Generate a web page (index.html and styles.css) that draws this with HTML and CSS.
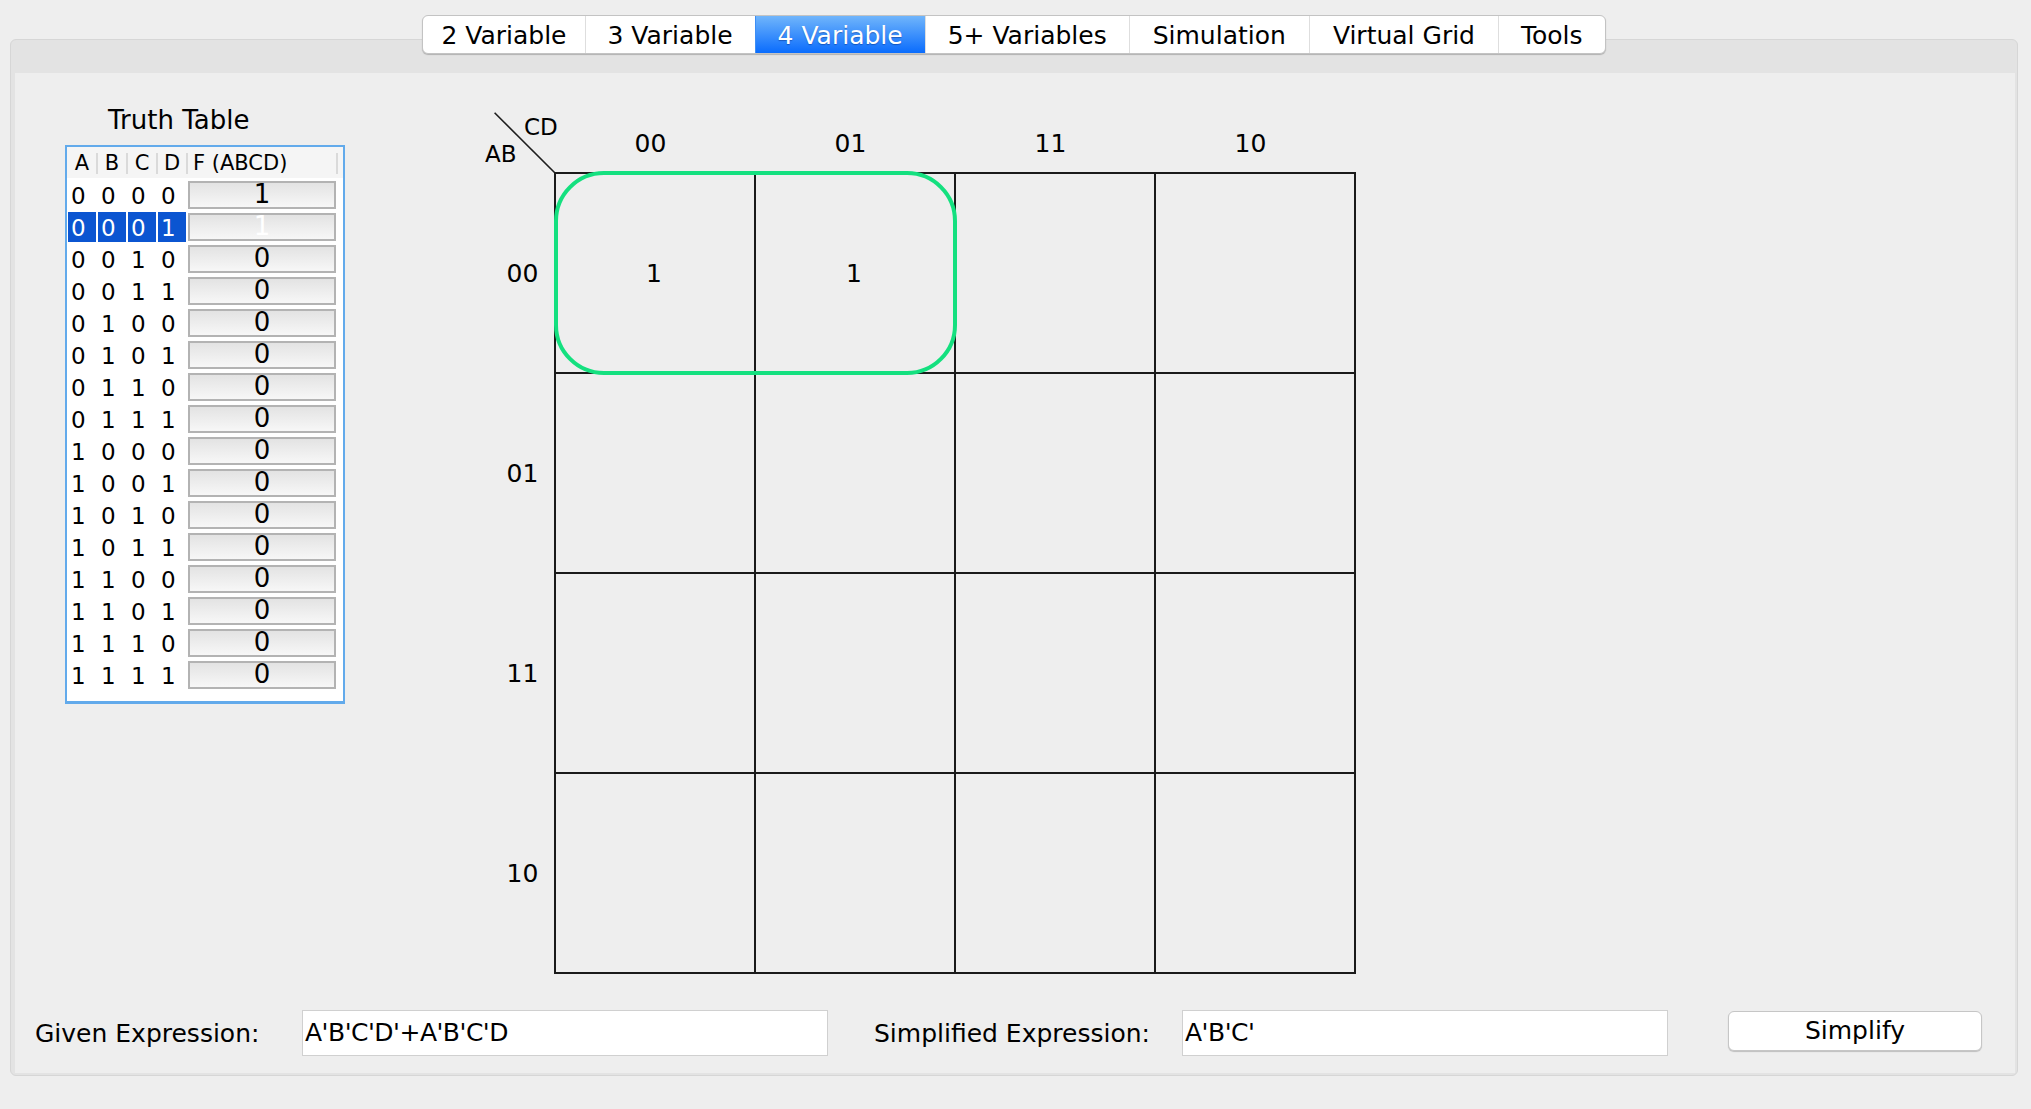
FILE: index.html
```html
<!DOCTYPE html>
<html lang="en">
<head>
<meta charset="utf-8">
<title>K-Map Solver</title>
<link rel="stylesheet" href="styles.css">
</head>
<body>
<div class="window">
  <div class="tabbar">
    <div class="tabs">
      <div class="tab">2 Variable</div>
      <div class="tab">3 Variable</div>
      <div class="tab active">4 Variable</div>
      <div class="tab">5+ Variables</div>
      <div class="tab">Simulation</div>
      <div class="tab">Virtual Grid</div>
      <div class="tab">Tools</div>
    </div>
  </div>
  <div class="panel">
    <div class="content">
      <div class="main">
        <div class="tt-col">
          <div class="tt-title">Truth Table</div>
          <div class="tt-box">
            <div class="tt-head">
              <div class="h">A</div><div class="h">B</div><div class="h">C</div><div class="h">D</div><div class="h hf">F (ABCD)</div><div class="h-rest"></div>
            </div>
            <div class="tt-row"><div class="c">0</div><div class="c">0</div><div class="c">0</div><div class="c">0</div><div class="f">1</div></div>
            <div class="tt-row sel"><div class="c">0</div><div class="c">0</div><div class="c">0</div><div class="c">1</div><div class="f">1</div></div>
            <div class="tt-row"><div class="c">0</div><div class="c">0</div><div class="c">1</div><div class="c">0</div><div class="f">0</div></div>
            <div class="tt-row"><div class="c">0</div><div class="c">0</div><div class="c">1</div><div class="c">1</div><div class="f">0</div></div>
            <div class="tt-row"><div class="c">0</div><div class="c">1</div><div class="c">0</div><div class="c">0</div><div class="f">0</div></div>
            <div class="tt-row"><div class="c">0</div><div class="c">1</div><div class="c">0</div><div class="c">1</div><div class="f">0</div></div>
            <div class="tt-row"><div class="c">0</div><div class="c">1</div><div class="c">1</div><div class="c">0</div><div class="f">0</div></div>
            <div class="tt-row"><div class="c">0</div><div class="c">1</div><div class="c">1</div><div class="c">1</div><div class="f">0</div></div>
            <div class="tt-row"><div class="c">1</div><div class="c">0</div><div class="c">0</div><div class="c">0</div><div class="f">0</div></div>
            <div class="tt-row"><div class="c">1</div><div class="c">0</div><div class="c">0</div><div class="c">1</div><div class="f">0</div></div>
            <div class="tt-row"><div class="c">1</div><div class="c">0</div><div class="c">1</div><div class="c">0</div><div class="f">0</div></div>
            <div class="tt-row"><div class="c">1</div><div class="c">0</div><div class="c">1</div><div class="c">1</div><div class="f">0</div></div>
            <div class="tt-row"><div class="c">1</div><div class="c">1</div><div class="c">0</div><div class="c">0</div><div class="f">0</div></div>
            <div class="tt-row"><div class="c">1</div><div class="c">1</div><div class="c">0</div><div class="c">1</div><div class="f">0</div></div>
            <div class="tt-row"><div class="c">1</div><div class="c">1</div><div class="c">1</div><div class="c">0</div><div class="f">0</div></div>
            <div class="tt-row"><div class="c">1</div><div class="c">1</div><div class="c">1</div><div class="c">1</div><div class="f">0</div></div>
          </div>
        </div>

        <div class="kmap">
          <div class="kmap-head">
            <div class="corner">
              <svg class="diag" width="80" height="80" viewBox="0 0 80 80"><line x1="10.6" y1="12.7" x2="71" y2="73" stroke="#1e1e1e" stroke-width="1.6"/></svg>
              <span class="lab-cd">CD</span>
              <span class="lab-ab">AB</span>
            </div>
            <div class="col-labels">
              <div class="cl">00</div><div class="cl">01</div><div class="cl">11</div><div class="cl">10</div>
            </div>
          </div>
          <div class="kmap-body">
            <div class="row-labels">
              <div class="rl">00</div><div class="rl">01</div><div class="rl">11</div><div class="rl">10</div>
            </div>
            <div class="grid">
              <div class="cell">1</div><div class="cell">1</div><div class="cell"></div><div class="cell"></div>
              <div class="cell"></div><div class="cell"></div><div class="cell"></div><div class="cell"></div>
              <div class="cell"></div><div class="cell"></div><div class="cell"></div><div class="cell"></div>
              <div class="cell"></div><div class="cell"></div><div class="cell"></div><div class="cell"></div>
              <div class="group"></div>
            </div>
          </div>
        </div>
      </div>

      <div class="bottom">
        <div class="lbl lbl1">Given Expression:</div>
        <div class="field field1">A'B'C'D'+A'B'C'D</div>
        <div class="lbl lbl2">Simplified Expression:</div>
        <div class="field field2">A'B'C'</div>
        <div class="btn">Simplify</div>
      </div>
    </div>
  </div>
</div>
</body>
</html>
```

FILE: styles.css
```css
* { box-sizing: border-box; }

html, body {
  margin: 0;
  padding: 0;
  background: #eeeeee;
  font-family: "DejaVu Sans", "Liberation Sans", sans-serif;
  color: #000;
}

.window {
  width: 2031px;
  height: 1109px;
  padding: 15px 13px 0 10px;
  overflow: hidden;
}

/* ---------- Tabs ---------- */
.tabbar {
  position: relative;
  z-index: 2;
  height: 39px;
  display: flex;
  justify-content: center;
}

.tabs {
  display: flex;
  height: 39px;
  border: 1px solid #c3c3c3;
  border-radius: 6px;
  background: #ffffff;
  box-shadow: 0 1px 1px rgba(0, 0, 0, 0.22);
  overflow: hidden;
}

.tab {
  padding: 2px 22px 0 22px;
  line-height: 35px;
  font-size: 25px;
  white-space: nowrap;
  border-left: 1px solid #dedede;
}

.tab:first-child {
  border-left: none;
  padding-left: 18px;
  padding-right: 18px;
}

.tab:nth-child(5),
.tab:nth-child(6) {
  padding-left: 23px;
  padding-right: 23px;
}

.tab.active {
  background: linear-gradient(#70b5fb, #0a6cfd);
  color: #ffffff;
  border-left-color: #3d8ef5;
  text-shadow: 0 1px 1px rgba(0, 40, 120, 0.45);
}

/* ---------- Panel ---------- */
.panel {
  margin-top: -15px;
  border: 1px solid #d6d6d6;
  border-radius: 6px;
  background: #e3e3e3;
  padding: 33px 2px 2px 4px;
}

.content {
  height: 1000px;
  background: #eeeeee;
  display: flex;
  flex-direction: column;
}

.main {
  flex: 1;
  display: flex;
  align-items: flex-start;
}

/* ---------- Truth table ---------- */
.tt-col {
  margin-left: 50px;
  margin-top: 32px;
}

.tt-title {
  font-size: 26px;
  line-height: 30px;
  height: 30px;
  margin-left: 43px;
  margin-bottom: 10px;
  white-space: nowrap;
}

.tt-box {
  width: 280px;
  height: 559px;
  border: 2px solid #62aaeb;
  border-bottom-width: 3px;
  background: #ffffff;
}

.tt-head {
  display: flex;
  height: 31px;
  background: #f5f5f5;
}

.h {
  position: relative;
  width: 30px;
  height: 31px;
  font-size: 21px;
  line-height: 33px;
  text-align: center;
}

.h::after {
  content: "";
  position: absolute;
  right: -1px;
  top: 6px;
  width: 2px;
  height: 21px;
  background: #dadada;
}

.h.hf {
  width: 150px;
  text-align: left;
  padding-left: 6px;
  white-space: nowrap;
}

.h-rest { flex: 1; }

.tt-row {
  display: flex;
  height: 32px;
}

.c {
  width: 28px;
  height: 30px;
  margin: 2px 1px 0 1px;
  padding-left: 3px;
  font-size: 23px;
  line-height: 33px;
}

.tt-row.sel .c {
  background: #0b55d1;
  color: #ffffff;
}

.f {
  width: 148px;
  height: 28px;
  margin: 3px 1px 0 1px;
  border: 2px solid #b3b3b3;
  background: linear-gradient(#e3e3e3, #f7f7f7);
  text-align: center;
  font-size: 26px;
  line-height: 23px;
}

.tt-row.sel .f { color: #ffffff; }

/* ---------- K-map ---------- */
.kmap {
  margin-left: 139px;
  margin-top: 27px;
}

.kmap-head {
  display: flex;
  height: 72px;
}

.corner {
  position: relative;
  width: 70px;
  height: 72px;
}

.diag {
  position: absolute;
  left: 0;
  top: 0;
  overflow: visible;
}

.lab-cd, .lab-ab {
  position: absolute;
  font-size: 23px;
  line-height: 23px;
}

.lab-cd { left: 40px; top: 16px; }
.lab-ab { left: 1px; top: 43px; }

.col-labels { display: flex; }

.cl {
  width: 200px;
  padding: 16px 7px 0 0;
  font-size: 25px;
  line-height: 56px;
  text-align: center;
}

.kmap-body { display: flex; }

.row-labels {
  width: 70px;
  padding-top: 2px;
}

.rl {
  height: 200px;
  line-height: 200px;
  padding-left: 7px;
  font-size: 25px;
  text-align: center;
}

.grid {
  position: relative;
  display: grid;
  grid-template-columns: repeat(4, 200px);
  grid-template-rows: repeat(4, 200px);
  border-left: 2px solid #1a1a1a;
  border-top: 2px solid #1a1a1a;
}

.cell {
  border-right: 2px solid #1a1a1a;
  border-bottom: 2px solid #1a1a1a;
  display: flex;
  align-items: center;
  justify-content: center;
  font-size: 25px;
  padding-right: 2px;
}

.group {
  position: absolute;
  left: -2px;
  top: -3px;
  width: 403px;
  height: 204px;
  border: 4px solid #14e07f;
  border-radius: 50px;
}

/* ---------- Bottom bar ---------- */
.bottom {
  display: flex;
  align-items: center;
  height: 46px;
  margin-bottom: 17px;
  padding-left: 20px;
  font-size: 25px;
}

.lbl { white-space: nowrap; }
.lbl1 { width: 267px; }
.lbl2 { width: 308px; margin-left: 46px; }

.field {
  height: 46px;
  line-height: 44px;
  border: 1px solid #d0d0d0;
  background: #ffffff;
  padding-left: 2px;
  white-space: nowrap;
  letter-spacing: -0.5px;
}

.field1 { width: 526px; }
.field2 { width: 486px; }

.btn {
  width: 254px;
  height: 40px;
  margin-left: 60px;
  margin-bottom: 4px;
  border: 1px solid #c6c6c6;
  border-radius: 6px;
  background: #ffffff;
  box-shadow: 0 1px 1px rgba(0, 0, 0, 0.2);
  text-align: center;
  line-height: 37px;
}
```
